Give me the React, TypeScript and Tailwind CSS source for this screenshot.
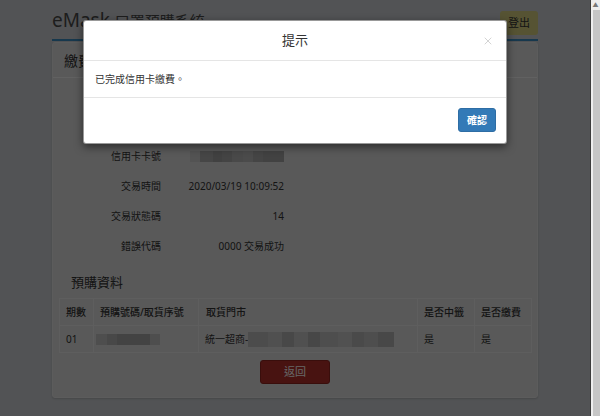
import { X } from "lucide-react";

interface InfoRow {
  label: string;
  value: React.ReactNode;
}

// blurred (mosaic) blocks that hide personal data in the screenshot
function Mosaic({ blocks, className = "" }: { blocks: string[]; className?: string }) {
  return (
    <span className={`inline-flex h-[11px] ${className}`}>
      {blocks.map((b, i) => (
        <span key={i} className={`h-full ${b}`} />
      ))}
    </span>
  );
}

const cardBlocks = [
  "w-[10px] bg-[#cfcfcf]",
  "w-[13px] bg-[#b0b0b0]",
  "w-[9px] bg-[#a4a4a4]",
  "w-[10px] bg-[#aaaaaa]",
  "w-[11px] bg-[#b6b6b6]",
  "w-[10px] bg-[#bcbcbc]",
  "w-[10px] bg-[#adadad]",
  "w-[21px] bg-[#a6a6a6]",
];

const orderBlocks = [
  "w-[11px] bg-[#c4c4c4]",
  "w-[10px] bg-[#b4b4b4]",
  "w-[33px] bg-[#a9a9a9]",
  "w-[10px] bg-[#c2c2c2]",
];

const storeBlocks = [
  "w-[20px] bg-[#bdbdbd]",
  "w-[14px] bg-[#c8c8c8]",
  "w-[12px] bg-[#b5b5b5]",
  "w-[14px] bg-[#c9c9c9]",
  "w-[12px] bg-[#b2b2b2]",
  "w-[18px] bg-[#c2c2c2]",
  "w-[14px] bg-[#cbcbcb]",
  "w-[12px] bg-[#b8b8b8]",
  "w-[14px] bg-[#c4c4c4]",
  "w-[16px] bg-[#b4b4b4]",
];

const rows: InfoRow[] = [
  { label: "訂單編號", value: "2020031900128" },
  { label: "繳費金額", value: "50" },
  { label: "信用卡卡號", value: <Mosaic blocks={cardBlocks} /> },
  { label: "交易時間", value: "2020/03/19 10:09:52" },
  { label: "交易狀態碼", value: "14" },
  { label: "錯誤代碼", value: "0000 交易成功" },
];

export default function App() {
  return (
    <div className="flex h-[416px] w-[600px] overflow-hidden font-['Noto_Sans','Noto_Sans_CJK_TC',sans-serif] text-[#333]">
      {/* Page */}
      <div className="relative flex-1 bg-[#cdd0d4]">
        <div className="px-[52px]">
          {/* Title bar */}
          <div className="flex items-start justify-between border-b-2 border-[#3a8cc0] pt-[11px] pb-[4px]">
            <h1 className="text-[19px] leading-[18px] font-normal text-[#4a4a4a]">
              eMask <span className="text-[15px]">口罩預購系統</span>
            </h1>
            <button className="h-[24px] w-[38px] rounded-[3px] bg-[#d6d07f] text-[11px] text-[#333]">
              登出
            </button>
          </div>

          {/* Panel */}
          <div className="mt-[1px] rounded-[3px] border border-[#e6e6e6] bg-[#dedede] shadow-[0_1px_2px_rgba(0,0,0,0.15)]">
            <div className="flex h-[35px] items-center border-b border-[#f2f2f2] px-[11px] text-[14px]">
              繳費結果
            </div>

            <div className="pt-[3px]">
              {rows.map((r) => (
                <div key={r.label} className="flex h-[30px] items-center text-[10px]">
                  <div className="w-[108px] text-right">{r.label}</div>
                  <div className="ml-[13px] flex w-[110px] justify-end">{r.value}</div>
                </div>
              ))}
            </div>

            <h2 className="mt-[12px] pl-[18px] text-[13px] leading-[18px] font-normal">預購資料</h2>

            <table className="mt-[7px] ml-[6px] w-[473px] border-collapse text-left text-[10px]">
              <thead>
                <tr className="h-[27px]">
                  <th className="w-[34px] border border-[#ececec] px-[6px] font-medium">期數</th>
                  <th className="w-[105px] border border-[#ececec] px-[6px] font-medium">預購號碼/取貨序號</th>
                  <th className="w-[219px] border border-[#ececec] px-[7px] font-medium">取貨門市</th>
                  <th className="w-[57px] border border-[#ececec] px-[6px] font-medium">是否中籤</th>
                  <th className="border border-[#ececec] px-[6px] font-medium">是否繳費</th>
                </tr>
              </thead>
              <tbody>
                <tr className="h-[27px]">
                  <td className="border border-[#ececec] px-[6px]">01</td>
                  <td className="border border-[#ececec] px-[2px]">
                    <Mosaic blocks={orderBlocks} className="align-middle" />
                  </td>
                  <td className="border border-[#ececec] px-[6px]">
                    <span className="inline-flex items-center">
                      統一超商-
                      <Mosaic blocks={storeBlocks} className="h-[15px]" />
                    </span>
                  </td>
                  <td className="border border-[#ececec] px-[6px]">是</td>
                  <td className="border border-[#ececec] px-[6px]">是</td>
                </tr>
              </tbody>
            </table>

            <div className="flex justify-center pt-[7px] pb-[13px]">
              <button className="h-[24px] w-[70px] rounded-[3px] border border-[#8f2420] bg-[#b3302b] text-[11px] text-white">
                返回
              </button>
            </div>
          </div>
        </div>

        {/* Modal backdrop + dialog */}
        <div className="absolute inset-0 flex justify-center bg-black/60 pt-[20px]">
          <div className="h-fit w-[424px] rounded-[3px] border border-black/40 bg-white shadow-[0_3px_9px_rgba(0,0,0,0.5)]">
            <div className="relative flex h-[40px] items-center justify-center border-b border-[#e5e5e5]">
              <span className="text-[13px] text-[#333]">提示</span>
              <X className="absolute right-[12px] top-[14px] h-[12px] w-[12px] text-[#c4c4c4]" strokeWidth={1.5} />
            </div>
            <div className="flex h-[36px] items-center pl-[11px] text-[10px] text-[#333]">
              已完成信用卡繳費。
            </div>
            <div className="flex justify-end border-t border-[#e5e5e5] pt-[10px] pr-[10px] pb-[11px]">
              <button className="h-[24px] w-[38px] rounded-[3px] border border-[#2e6da4] bg-[#337ab7] text-[10px] font-semibold text-white">
                確認
              </button>
            </div>
          </div>
        </div>
      </div>

      {/* Window scrollbar */}
      <div className="flex w-[10px] flex-col border-l border-[#3c3c3c] bg-[#c6c6c6]">
        <div className="flex h-[10px] items-center justify-center bg-[#ececec] text-[6px] leading-none text-[#777]">
          ▲
        </div>
        <div className="flex-1 border-l-2 border-[#eeeeee]" />
      </div>
    </div>
  );
}
